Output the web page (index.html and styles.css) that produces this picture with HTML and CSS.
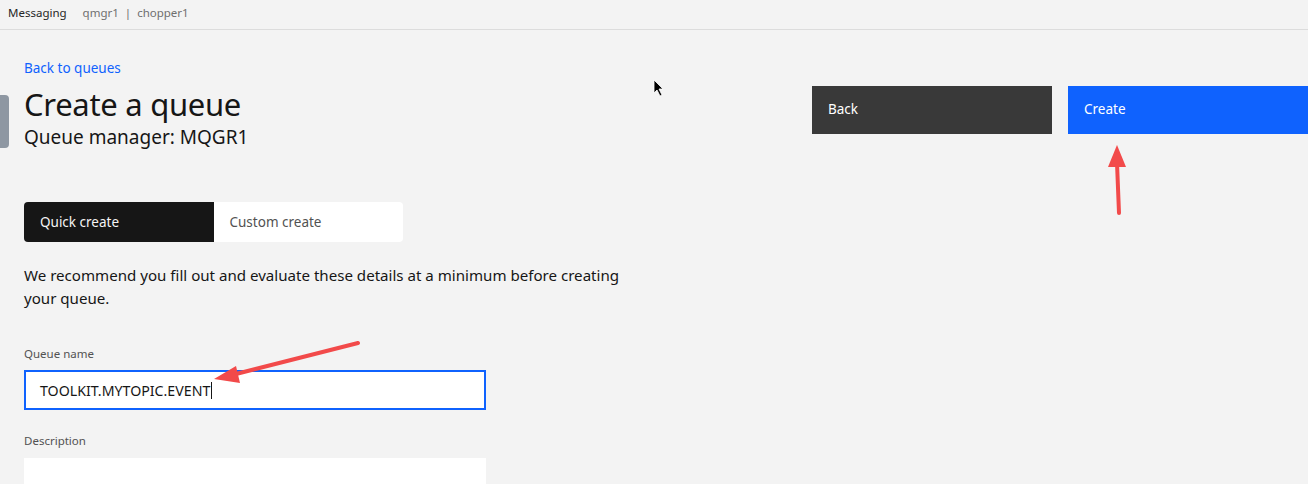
FILE: index.html
```html
<!DOCTYPE html>
<html lang="en">
<head>
<meta charset="utf-8">
<title>Create a queue</title>
<link rel="stylesheet" href="styles.css">
</head>
<body>
<header class="topbar">
  <span class="crumb-main">Messaging</span>
  <span class="crumb-sub">qmgr1 &nbsp;|&nbsp; chopper1</span>
</header>
<div class="side-tab"></div>
<main class="page">
  <section class="form-col">
    <a class="back-link" href="#">Back to queues</a>
    <h1 class="title">Create a queue</h1>
    <p class="subtitle">Queue manager: MQGR1</p>
    <div class="switcher">
      <button class="switch switch-on">Quick create</button>
      <button class="switch switch-off">Custom create</button>
    </div>
    <p class="intro">We recommend you fill out and evaluate these details at a minimum before creating your queue.</p>
    <label class="field-label">Queue name</label>
    <div class="text-input"><span>TOOLKIT.MYTOPIC.EVENT</span><span class="caret"></span></div>
    <label class="field-label desc-label">Description</label>
    <div class="text-area"></div>
  </section>
  <section class="actions">
    <button class="btn btn-back">Back</button>
    <button class="btn btn-create">Create</button>
  </section>
</main>
<svg class="arrow-up" width="30" height="90" viewBox="0 0 30 90">
  <line x1="16" y1="68" x2="14" y2="18" stroke="#f24a4a" stroke-width="4" stroke-linecap="round"/>
  <polygon points="14,0 5,22 23,22" fill="#f24a4a"/>
</svg>
<svg class="arrow-left" width="160" height="50" viewBox="0 0 160 50">
  <line x1="146" y1="6" x2="20" y2="38" stroke="#f24a4a" stroke-width="4" stroke-linecap="round"/>
  <polygon points="2,42 24,29 28,46" fill="#f24a4a"/>
</svg>
<svg class="cursor" width="12" height="18" viewBox="0 0 12 18">
  <path d="M1 1 L1 14 L4 11 L7 17 L9 16 L6 10 L10 10 Z" fill="#000" stroke="#fff" stroke-width="0.8"/>
</svg>
</body>
</html>
```

FILE: styles.css
```css
* { box-sizing: border-box; }
html, body { margin: 0; padding: 0; }
body {
  width: 1308px;
  height: 484px;
  overflow: hidden;
  background: #f3f3f3;
  font-family: "Noto Sans", "Open Sans", sans-serif;
  color: #161616;
  position: relative;
}
.topbar {
  height: 30px;
  border-bottom: 1px solid #dcdcdc;
  display: flex;
  align-items: center;
  padding: 0 8px 4px;
  font-size: 11.5px;
  gap: 16px;
}
.crumb-main { color: #262626; }
.crumb-sub { color: #6f6f6f; }
.side-tab {
  position: absolute;
  left: 0;
  top: 95px;
  width: 9px;
  height: 53px;
  background: #8e97a2;
  border-radius: 0 4px 4px 0;
}
.page {
  display: flex;
  justify-content: space-between;
  padding: 29px 0 0 24px;
}
.form-col {
  width: 616px;
  display: flex;
  flex-direction: column;
  align-items: flex-start;
}
.back-link {
  color: #0f62fe;
  text-decoration: none;
  font-size: 13.5px;
  line-height: 18px;
}
.title {
  margin: 7px 0 0;
  font-size: 31px;
  font-weight: 400;
  line-height: 40px;
  letter-spacing: -0.3px;
}
.subtitle {
  margin: 0;
  font-size: 19px;
  line-height: 26px;
}
.switcher {
  margin-top: 52px;
  display: flex;
  width: 379px;
  height: 40px;
}
.switch {
  flex: 1;
  border: 0;
  font-family: inherit;
  font-size: 13.5px;
  text-align: left;
  padding: 0 16px;
}
.switch-on {
  background: #161616;
  color: #f4f4f4;
  border-radius: 4px 0 0 4px;
}
.switch-off {
  background: #fff;
  color: #525252;
  border-radius: 0 4px 4px 0;
}
.intro {
  margin: 22px 0 0;
  font-size: 15.1px;
  line-height: 23px;
  color: #161616;
}
.field-label {
  margin-top: 36px;
  font-size: 11.5px;
  line-height: 16px;
  color: #525252;
}
.text-input {
  margin-top: 8px;
  width: 462px;
  height: 40px;
  background: #fff;
  border: 2px solid #0f62fe;
  display: flex;
  align-items: center;
  padding: 0 14px;
  font-size: 14.2px;
  color: #161616;
}
.caret {
  display: inline-block;
  width: 1px;
  height: 17px;
  background: #161616;
  margin-left: 1px;
}
.desc-label { margin-top: 23px; }
.text-area {
  margin-top: 9px;
  width: 462px;
  height: 40px;
  background: #fff;
}
.actions {
  display: flex;
  gap: 16px;
  margin-top: 27px;
}
.btn {
  width: 240px;
  height: 48px;
  border: 0;
  font-family: inherit;
  font-size: 13.5px;
  color: #fff;
  text-align: left;
  padding: 0 16px 2px;
}
.btn-back { background: #393939; }
.btn-create { background: #0f62fe; }
.arrow-up { position: absolute; left: 1103px; top: 145px; }
.arrow-left { position: absolute; left: 212px; top: 337px; }
.cursor { position: absolute; left: 653px; top: 79px; }
```
